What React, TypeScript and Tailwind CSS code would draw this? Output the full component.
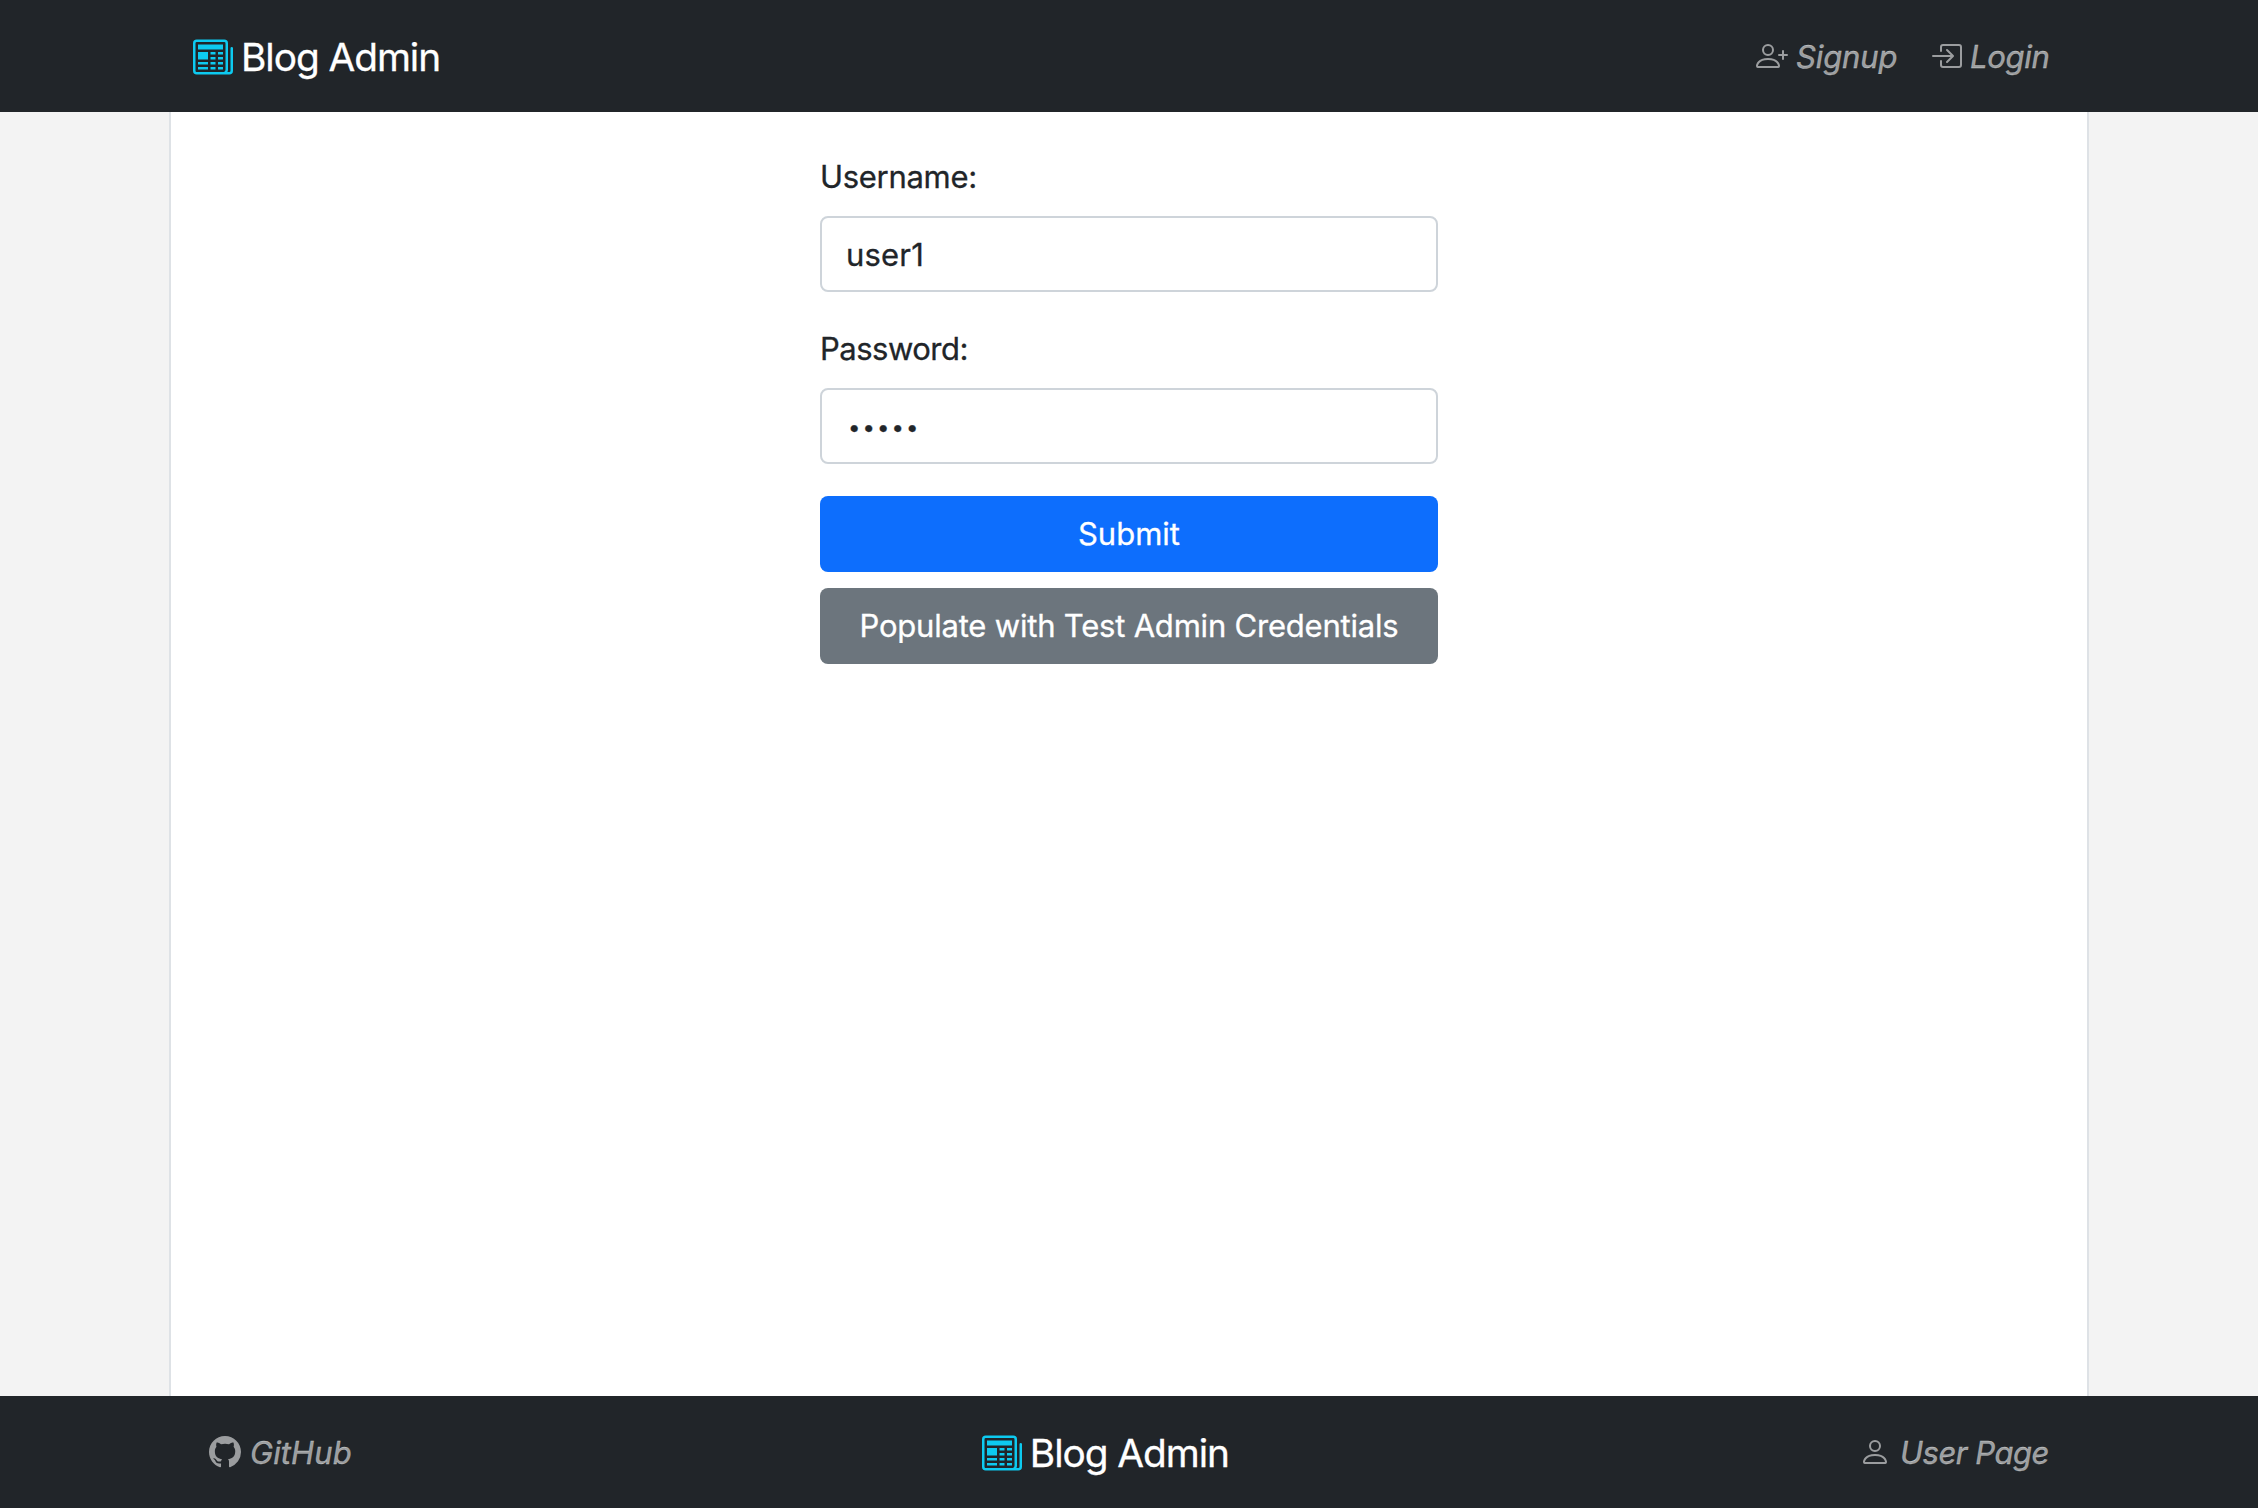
import { BsBoxArrowInRight, BsGithub, BsNewspaper, BsPerson, BsPersonPlus } from "react-icons/bs";

function Brand() {
  return (
    <a href="#" className="flex items-center text-[38.8px] leading-[60px] tracking-[-1.05px] text-white">
      <BsNewspaper className="mt-0.5 mr-2 size-10 text-[#0dcaf0]" />
      <span className="pt-0.5">Blog Admin</span>
    </a>
  );
}

const navLink = "flex items-center text-[31px] leading-[48px] italic text-white/55";

export default function App() {
  return (
    <div className="flex h-[1508px] flex-col bg-[#f3f3f3] font-['Inter',sans-serif] text-[31px] leading-[48px] text-[#212529] [-webkit-text-stroke:0.3px]">
      <nav className="flex h-28 shrink-0 items-center justify-between bg-[#212529] pr-[209px] pl-[193px]">
        <Brand />
        <div className="flex items-center">
          <a href="#" className={navLink}>
            <BsPersonPlus className="mr-2 size-8" />
            <span className="w-[101px] pt-px tracking-[-0.1px]">Signup</span>
          </a>
          <a href="#" className={`ml-[33px] ${navLink}`}>
            <BsBoxArrowInRight className="mr-2 size-8" />
            <span className="w-[79px] pt-px tracking-[-0.3px]">Login</span>
          </a>
        </div>
      </nav>

      <main className="mx-auto w-[1920px] grow border-x-2 border-[#dee2e6] bg-white">
        <form className="mx-auto flex w-[618px] flex-col pt-[41px]">
          <label htmlFor="username" className="mb-[15px] tracking-[-0.3px]">Username:</label>
          <input
            id="username"
            type="text"
            defaultValue="user1"
            className="mb-[33px] h-[76px] rounded-lg border-2 border-[#ced4da] bg-white px-6 tracking-[0.2px]"
          />
          <label htmlFor="password" className="mb-[15px] tracking-[-0.5px]">Password:</label>
          <input
            id="password"
            type="text"
            defaultValue="•••••"
            className="mb-8 h-[76px] rounded-lg border-2 border-[#ced4da] bg-white px-[26px] pt-px text-[22px] tracking-[2.1px]"
          />
          <button type="button" className="mb-4 h-[76px] rounded-lg bg-[#0d6efd] text-white">Submit</button>
          <button type="button" className="h-[76px] rounded-lg bg-[#6c757d] tracking-[-0.2px] text-white">
            Populate with Test Admin Credentials
          </button>
        </form>
      </main>

      <footer className="flex h-28 shrink-0 items-center justify-between bg-[#212529] px-[209px]">
        <a href="#" className={navLink}>
          <BsGithub className="mr-[9px] size-8" />
          <span className="pt-px tracking-[0.1px]">GitHub</span>
        </a>
        <Brand />
        <a href="#" className={navLink}>
          <BsPerson className="mr-[9px] size-8" />
          <span className="w-[149px] pt-px tracking-[-0.48px] whitespace-nowrap">User Page</span>
        </a>
      </footer>
    </div>
  );
}
